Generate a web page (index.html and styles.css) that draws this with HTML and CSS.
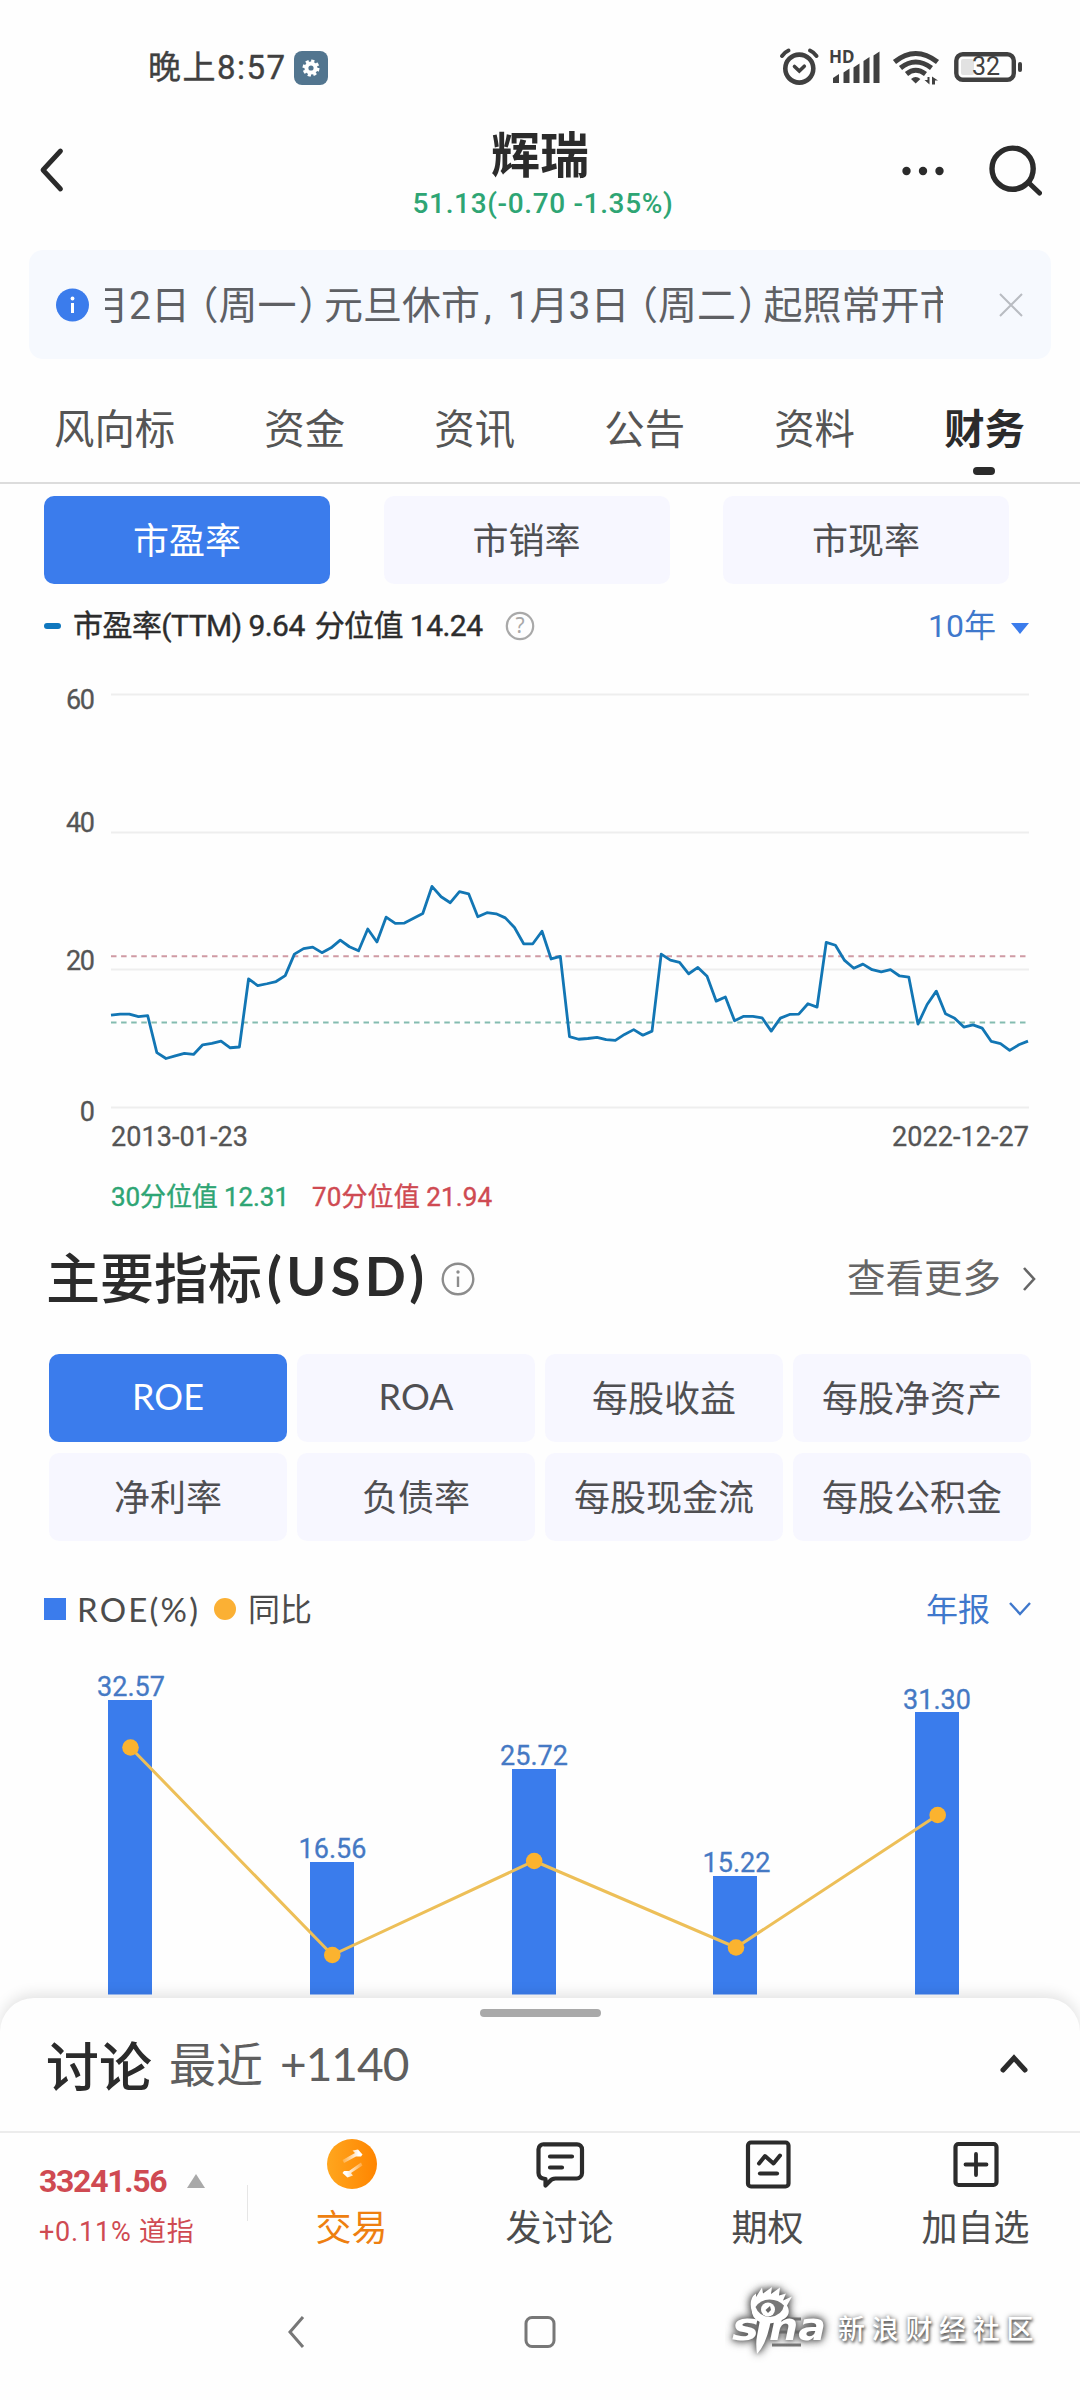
FILE: index.html
```html
<!DOCTYPE html>
<html lang="zh-CN">
<head>
<meta charset="utf-8">
<title>辉瑞 - 财务</title>
<link rel="stylesheet" href="styles.css">
</head>
<body>
<div class="status">
  <span class="clock">晚上8:57</span>
  <svg class="badge" width="34" height="34" viewBox="0 0 34 34"><rect width="34" height="34" rx="8" fill="#52758f"/><circle cx="17" cy="17" r="4.6" fill="none" stroke="#fff" stroke-width="4"/><circle cx="17" cy="17" r="7.2" fill="none" stroke="#fff" stroke-width="2.6" stroke-dasharray="3.2 2.45"/></svg>
  <svg class="status-icons" width="250" height="44" viewBox="776 46 250 44">
    <g fill="none" stroke="#404040" stroke-width="4.6" stroke-linecap="round">
      <circle cx="799.3" cy="68.6" r="14"/>
      <path d="M794.5 66.5l4.8 4.5 5-4.8" stroke-width="3.6"/>
      <path d="M782 56q2-3.500 6.500-5.500M816.500 56q-2-3.500-6.500-5.500" stroke-width="4"/>
    </g>
    <text x="829" y="63.300" class="hd">HD</text>
    <g fill="#404040">
      <path d="M833 83v-5l6-4v9zM843.500 83v-10.500l6-4V83zM853.500 83V67.500l6-4V83zM863.500 83V61l6-4v26zM873.500 83V55.500l6-4V83z"/>
      <path d="M915.700 83.500l-4.700-4.500q4.700-4 9.400 0z"/>
      <path d="M924.500 80h3v-3h2v7.500zM932 84.500v-8l6 4h-3v4z"/>
    </g>
    <g fill="none" stroke="#404040" stroke-width="5">
      <path d="M894.500 62q21-17 43 0M900.500 68q15-12 31 0M906.500 74q9-7.500 19 0"/>
    </g>
    <rect x="956.300" y="54.200" width="57.500" height="25.600" rx="6.500" fill="none" stroke="#404040" stroke-width="4.400"/>
    <rect x="961" y="59" width="13" height="16" rx="2" fill="#e2e2e2"/>
    <text x="986" y="75.300" class="battery">32</text>
    <rect x="1018" y="62" width="4" height="10" rx="2" fill="#404040"/>
  </svg>
</div>

<header class="header">
  <svg class="back" width="26" height="46" viewBox="0 0 26 46"><path d="M22.500 4L5 23l17.500 19" fill="none" stroke="#2b2b2b" stroke-width="4.800" stroke-linecap="round" stroke-linejoin="round"/></svg>
  <div class="stock">
    <h1>辉瑞</h1>
    <div class="quote">51.13(-0.70 -1.35%)</div>
  </div>
  <div class="actions">
    <svg width="42" height="10" viewBox="0 0 42 10" fill="#2b2b2b"><circle cx="4.500" cy="5" r="4.200"/><circle cx="21" cy="5" r="4.200"/><circle cx="37.500" cy="5" r="4.200"/></svg>
    <svg width="54" height="52" viewBox="0 0 54 52"><g fill="none" stroke="#2b2b2b"><circle cx="24.600" cy="23.700" r="20.600" stroke-width="5.400"/><path d="M41.500 38.500l10 9.500" stroke-width="5" stroke-linecap="round"/></g></svg>
  </div>
</header>

<div class="notice">
  <svg width="34" height="34" viewBox="0 0 34 34"><circle cx="16.500" cy="17" r="16.500" fill="#3b7cec"/><circle cx="16.500" cy="10.500" r="1.900" fill="#fff"/><path d="M16.500 15v10" stroke="#fff" stroke-width="3"/></svg>
  <div class="marquee"><p>月2日<i class="po">（</i>周一<i class="pc">）</i>元旦休市<i class="cm">,</i>1月3日<i class="po">（</i>周二<i class="pc">）</i>起照常开市</p></div>
  <svg width="24" height="24" viewBox="0 0 24 24"><path d="M1 1l22 22M23 1L1 23" stroke="#b9bcc2" stroke-width="2"/></svg>
</div>

<nav class="tabs">
  <span>风向标</span><span>资金</span><span>资讯</span><span>公告</span><span>资料</span><span class="active">财务</span>
</nav>

<div class="ratios">
  <button class="chip on">市盈率</button><button class="chip">市销率</button><button class="chip">市现率</button>
</div>

<div class="pe-legend">
  <span class="dash"></span>
  <span class="pe-text">市盈率(TTM) 9.64 <b>分位值 14.24</b></span>
  <svg width="30" height="30" viewBox="0 0 30 30"><circle cx="15" cy="15" r="13.200" fill="none" stroke="#a9a9a9" stroke-width="2.200"/><text x="15" y="22" class="q">?</text></svg>
  <span class="range">10年</span>
  <span class="tri"></span>
</div>

<svg class="pe-chart" width="1080" height="560" viewBox="0 660 1080 560">
  <path d="M111 694.500H1029M111 832.500H1029M111 969.500H1029M111 1107.500H1029" stroke="#eeeeee" stroke-width="2"/>
  <path d="M111 956.300H1029" stroke="#cf9aa4" stroke-width="2" stroke-dasharray="5.500 4.600"/>
  <path d="M111 1022.600H1029" stroke="#84bcb0" stroke-width="2" stroke-dasharray="5.500 4.600"/>
  <g class="axis">
    <text x="95" y="708.500" text-anchor="end" textLength="29">60</text>
    <text x="95" y="831.500" text-anchor="end" textLength="29">40</text>
    <text x="95" y="969.500" text-anchor="end" textLength="29">20</text>
    <text x="95" y="1120.500" text-anchor="end">0</text>
    <text x="111" y="1146" textLength="137">2013-01-23</text>
    <text x="1029" y="1146" text-anchor="end" textLength="137">2022-12-27</text>
  </g>
  <g transform="translate(111 660) scale(9.17 .37)">
    <polyline fill="none" stroke="#1276b4" stroke-width="2.800" stroke-linejoin="round" vector-effect="non-scaling-stroke" points="0,960 1,957 2,957 3,964 4,961 5,1061 6,1077 7,1070 8,1063 9,1066 10,1040 11,1036 12,1030 13,1048 14,1046 15,862 16,880 17,875 18,869 19,853 20,795 21,780 22,776 23,791 24,778 25,757 26,775 27,786 28,727 29,762 30,695 31,712 32,711 33,698 34,685 35,612 36,640 37,656 38,626 39,632 40,694 41,683 42,686 43,697 44,723 45,767 46,767 47,733 48,808 49,801 50,1018 51,1025 52,1023 53,1020 54,1026 55,1028 56,1012 57,999 58,1014 59,1003 60,795 61,811 62,817 63,848 64,831 65,855 66,922 67,911 68,975 69,963 70,963 71,967 72,1003 73,968 74,958 75,957 76,929 77,938 78,763 79,771 80,812 81,833 82,822 83,837 84,843 85,837 86,854 87,857 88,984 89,931 90,895 91,956 92,968 93,992 94,986 95,995 96,1031 97,1037 98,1055 99,1040 100,1030"/>
  </g>
  <text x="111" y="1205.500" class="p30" textLength="178">30分位值 12.31</text>
  <text x="312" y="1205.500" class="p70" textLength="180">70分位值 21.94</text>
</svg>

<div class="section-head">
  <h2>主要指标<span>(USD)</span></h2>
  <svg width="34" height="34" viewBox="0 0 34 34"><circle cx="17" cy="17" r="15.300" fill="none" stroke="#8c8c8c" stroke-width="2.400"/><circle cx="17" cy="10" r="1.700" fill="#8c8c8c"/><path d="M17 14.500v10.500" stroke="#8c8c8c" stroke-width="2.400"/></svg>
  <span class="more">查看更多</span>
  <svg class="more-arrow" width="14" height="26" viewBox="0 0 14 26"><path d="M2 2l10 11L2 24" fill="none" stroke="#666" stroke-width="2.600"/></svg>
</div>

<div class="metrics">
  <button class="chip on">ROE</button><button class="chip">ROA</button><button class="chip">每股收益</button><button class="chip">每股净资产</button>
  <button class="chip">净利率</button><button class="chip">负债率</button><button class="chip">每股现金流</button><button class="chip">每股公积金</button>
</div>

<div class="roe-legend">
  <span class="sq"></span><span class="t1">ROE(%)</span><span class="dot"></span><span class="t2">同比</span>
  <span class="period">年报</span>
  <svg width="24" height="16" viewBox="0 0 24 16"><path d="M2 2l10 11L22 2" fill="none" stroke="#3f78cc" stroke-width="2.400"/></svg>
</div>

<svg class="roe-chart" width="1080" height="350" viewBox="0 1648 1080 350">
  <g fill="#3a7cec">
    <rect x="108" y="1700" width="44" height="294.500"/>
    <rect x="310" y="1862" width="44" height="132.500"/>
    <rect x="512" y="1769" width="44" height="225.500"/>
    <rect x="713" y="1876" width="44" height="118.500"/>
    <rect x="915" y="1712" width="44" height="282.500"/>
  </g>
  <polyline points="130.500,1747.500 332.300,1955 534.200,1861 736,1947.500 937.700,1815" fill="none" stroke="#edbf58" stroke-width="3"/>
  <g fill="#fbb32f"><circle cx="130.500" cy="1747.500" r="8.300"/><circle cx="332.300" cy="1955" r="8.300"/><circle cx="534.200" cy="1861" r="8.300"/><circle cx="736" cy="1947.500" r="8.300"/><circle cx="937.700" cy="1815" r="8.300"/></g>
  <g class="val">
    <text x="131" y="1696">32.57</text><text x="332.500" y="1858">16.56</text><text x="534" y="1765">25.72</text><text x="736.500" y="1872">15.22</text><text x="937" y="1709">31.30</text>
  </g>
</svg>

<section class="sheet">
  <div class="handle"></div>
  <div class="discuss">
    <strong>讨论</strong><span>最近</span><em>+1140</em>
    <svg width="30" height="20" viewBox="0 0 30 20"><path d="M4 16L15 4l11 12" fill="none" stroke="#2b2b2b" stroke-width="5" stroke-linecap="round" stroke-linejoin="miter"/></svg>
  </div>
</section>

<footer class="toolbar">
  <div class="index">
    <div class="row"><b>33241.56</b><span class="up"></span></div>
    <div class="sub">+0.11% 道指</div>
  </div>
  <div class="vline"></div>
  <div class="item trade">
    <svg width="52" height="52" viewBox="0 0 52 52"><defs><linearGradient id="og" x1="0" x2="1"><stop offset="0" stop-color="#ffa61e"/><stop offset="1" stop-color="#ff8500"/></linearGradient><linearGradient id="wa" x1="0" x2="1"><stop offset="0" stop-color="#fff" stop-opacity=".2"/><stop offset=".8" stop-color="#fff"/></linearGradient><linearGradient id="wb" x1="1" x2="0"><stop offset="0" stop-color="#fff" stop-opacity=".2"/><stop offset=".8" stop-color="#fff"/></linearGradient></defs><circle cx="26" cy="26" r="25" fill="url(#og)"/><path d="M18 25L16.500 22 29 15l-2.500-2.500L32 11.500l4.500 5-1.500 2h-5z" fill="url(#wa)"/><path d="M35 24.500l1.500 3L25 35l2 2.500-5.500 2-5-4.500 1.500-2h5z" fill="url(#wb)"/></svg>
    <span>交易</span>
  </div>
  <div class="item">
    <svg width="52" height="52" viewBox="0 0 52 52" fill="none" stroke="#2b2b2b" stroke-width="4.200" stroke-linejoin="round" stroke-linecap="round"><path d="M10 6.300h33a5 5 0 0 1 5 5V35a5.500 5.500 0 0 1-5.500 5.500H21.500q-4 0-6.500 3.500l-3.500 3.500v-6.500q-7-.5-7-6V11.300a5 5 0 0 1 5.500-5z"/><path d="M16 18.500h22M16 29.500h12"/></svg>
    <span>发讨论</span>
  </div>
  <div class="item">
    <svg width="52" height="52" viewBox="0 0 52 52" fill="none" stroke="#2b2b2b" stroke-width="4.200" stroke-linejoin="round" stroke-linecap="round"><rect x="6" y="4.500" width="40.500" height="44" rx="3"/><path d="M17 25.500l6-7.500 8.500 7.500 6.500-8" stroke-width="4"/><path d="M18 35.500h17"/></svg>
    <span>期权</span>
  </div>
  <div class="item">
    <svg width="52" height="52" viewBox="0 0 52 52" fill="none" stroke="#2b2b2b" stroke-width="4.200" stroke-linejoin="round" stroke-linecap="round"><rect x="5.500" y="6" width="41" height="41" rx="3"/><path d="M26 16v21M15.500 26.500h21" stroke-width="3.800"/></svg>
    <span>加自选</span>
  </div>
</footer>

<div class="sysnav">
  <svg width="18" height="34" viewBox="0 0 18 34"><path d="M16 2L3 17l13 15" fill="none" stroke="#777" stroke-width="3"/></svg>
  <svg width="32" height="34" viewBox="0 0 32 34"><rect x="2" y="2.500" width="28" height="29" rx="6" fill="none" stroke="#777" stroke-width="3"/></svg>
  <svg width="30" height="34" viewBox="0 0 30 34"><path d="M0 4h29M0 17h29M0 30h29" stroke="#777" stroke-width="3"/></svg>
</div>

<div class="watermark">
  <svg width="110" height="84" viewBox="725 2280 110 84">
    <g class="logo">
      <text x="732" y="2340" class="sina" textLength="27" lengthAdjust="spacingAndGlyphs">s</text>
      <path d="M760 2320h11l-1.500 7q-4 18-12.500 27-1.500-11 0-18z" fill="#fff"/>
      <text x="769" y="2340" class="sina" textLength="57" lengthAdjust="spacingAndGlyphs">na</text>
      <path d="M752 2312q-4-13 4-18.500l0 3.500 6-9.500 1 6 9-6.500-1 7 9-6.500-1 8 7-2-3 7 9-4-5 9q5 9-4 14-8 4.500-18 4-11-2-13-10.500z" fill="#fff"/>
      <path d="M755.500 2307q5-7.500 14-7.500t14.500 6q-2 10-14 11.500-11-.5-14.500-10z" fill="#777"/>
      <circle cx="768" cy="2309.500" r="7" fill="#fff"/><path d="M765.500 2310l4.500-4 1 4-3 3z" fill="#666"/>
    </g>
  </svg>
  <span>新浪财经社区</span>
</div>
</body>
</html>
```
FILE: styles.css
```css
* { box-sizing: border-box; margin: 0; padding: 0; }
html, body { width: 1080px; height: 2400px; overflow: hidden; }
body {
  position: relative;
  display: flex;
  flex-direction: column;
  background: #fefefe;
  color: #4c4c4c;
  font-family: Roboto, "Noto Sans CJK SC", sans-serif;
}
svg { display: block; flex: none; }
button { border: 0; font: inherit; color: inherit; }

.status { height: 100px; flex: none; display: flex; align-items: center; padding: 36px 54px 0 148px; color: #404040; }
.clock { font-size: 33px; line-height: 40px; width: 146px; white-space: nowrap; letter-spacing: 1.5px; -webkit-text-stroke: .4px #404040; }
.status-icons { margin-left: auto; }
.hd { font: 700 17px "Noto Sans", sans-serif; fill: #404040; }
.battery { font: 400 25px Roboto, sans-serif; fill: #404040; text-anchor: middle; }

.header { height: 150px; flex: none; display: grid; grid-template-columns: 1fr auto 1fr; padding: 0 38px; align-items: start; }
.back { margin-top: 47px; }
.stock { padding-top: 29px; text-align: center; }
.stock h1 { font-size: 49px; line-height: 56px; font-weight: 700; color: #2b2b2b; }
.quote { font-size: 28px; line-height: 38px; margin: 0 -3px 0 3px; font-weight: 500; color: #2ea574; white-space: nowrap; letter-spacing: .65px; }
.actions { display: flex; justify-content: flex-end; align-items: center; gap: 44px; margin-top: 45px; }

.notice { height: 109px; flex: none; margin: 0 29px; padding: 0 28px 0 27px; display: flex; align-items: center; border-radius: 14px; background: #f6f9fe; }
.marquee { width: 838px; margin: 0 auto 0 15px; overflow: hidden; }
.marquee p { margin: -2px 0 0 -15px; font-size: 39px; line-height: 56px; white-space: nowrap; color: #5e6064; }
.marquee i { font-style: normal; }
.po, .pc { font-family: "Noto Sans CJK SC", sans-serif; font-feature-settings: "halt"; }
.po { padding-left: 9px; }
.pc { padding: 0 6px 0 2px; }
.cm { padding: 0 16px 0 4px; }

.tabs { height: 125px; flex: none; display: flex; justify-content: space-between; padding: 51px 55px 0 54px; border-bottom: 2px solid #dcdcdc; font-size: 40.4px; line-height: 42px; color: #555; }
.tabs .active { position: relative; font-weight: 700; color: #2b2b2b; }
.tabs .active::after { content: ""; position: absolute; left: 50%; top: 57px; width: 22px; height: 8px; margin-left: -12px; border-radius: 4px; background: #2b2b2b; }

.chip { display: flex; align-items: center; justify-content: center; height: 88px; padding-bottom: 4px; border-radius: 10px; background: #f7f7ff; color: #4f4f52; font-family: Lato, "Noto Sans CJK SC", sans-serif; font-size: 36px; }
.chip.on { background: #3b7cec; color: #fff; }
.ratios { flex: none; display: grid; grid-template-columns: repeat(3, 286px); gap: 53.5px; padding: 12px 0 0 44px; }

.pe-legend { height: 76px; flex: none; display: flex; align-items: center; padding: 8px 51px 0 44px; }
.dash { width: 17px; height: 6px; border-radius: 3px; background: #0f77be; margin-right: 12px; }
.pe-text { width: 412px; font-size: 30px; line-height: 36px; color: #2d2d2d; letter-spacing: -.55px; margin-right: 20px; white-space: nowrap; -webkit-text-stroke: .4px #2d2d2d; }
.pe-text b { font-weight: 400; margin-left: 3px; }
.q { font: 21px "Noto Sans", sans-serif; fill: #a9a9a9; text-anchor: middle; }
.range { margin-left: auto; font-size: 32px; line-height: 36px; color: #3f78cc; }
.tri { margin: 4px 0 0 15px; border: solid transparent; border-width: 11px 9px 0; border-top-color: #3b7cec; }

.axis { font-size: 27px; fill: #555; stroke: #555; stroke-width: .3px; }
.p30, .p70 { font-size: 26px; }
.p30 { fill: #2ea574; stroke: #2ea574; stroke-width: .4px; }
.p70 { fill: #cf4a52; stroke: #cf4a52; stroke-width: .4px; }

.section-head { height: 134px; flex: none; display: flex; align-items: center; padding: 0 44px 16px 46px; }
.section-head h2 { display: flex; font: 500 54px/60px "Noto Sans CJK SC", sans-serif; color: #2b2b2b; white-space: nowrap; width: 395px; margin-top: -6px; }
.section-head h2 span { font-family: Lato, sans-serif; font-weight: 700; letter-spacing: 4.4px; margin-left: 5px; }
.more { margin-left: auto; font-size: 38.5px; line-height: 44px; color: #666; }
.more-arrow { margin-left: 21px; }

.metrics { flex: none; display: grid; grid-template-columns: repeat(4, 237px); gap: 11px; padding: 0 0 0 49px; }
.metrics .chip { width: 238px; }

.roe-legend { height: 107px; flex: none; display: flex; align-items: center; padding: 29px 48px 0 44px; font-family: Lato, "Noto Sans CJK SC", sans-serif; font-size: 32px; line-height: 36px; color: #4c4c4c; }
.sq { width: 22px; height: 22px; background: #3b7cec; margin-right: 11px; }
.t1 { width: 137px; white-space: nowrap; font-size: 33px; letter-spacing: 2.2px; }
.dot { width: 22px; height: 22px; border-radius: 50%; background: #fbb034; margin-right: 12px; }
.period { margin-left: auto; margin-right: 18px; color: #3f78cc; }
.val { font-size: 27px; fill: #4579c4; stroke: #4579c4; stroke-width: .3px; text-anchor: middle; }

.sheet { height: 135px; flex: none; position: relative; border-radius: 34px 34px 0 0; background: #fefefe; box-shadow: 0 -4px 14px rgba(0, 0, 0, .11); border-bottom: 2px solid #ececec; clip-path: inset(-20px 0 0 0); padding-top: 11px; }
.handle { width: 121px; height: 8px; border-radius: 4px; background: #a9a9a9; margin: 0 auto; }
.discuss { display: flex; align-items: center; height: 94px; padding: 0 51px 0 46px; font-family: Lato, "Noto Sans CJK SC", sans-serif; }
.discuss strong { font-size: 53px; font-weight: 500; color: #2b2b2b; font-family: "Noto Sans CJK SC", sans-serif; line-height: 60px; }
.discuss span { margin-left: 17px; font-size: 47px; line-height: 60px; color: #5f5f5f; }
.discuss em { margin-left: 17px; font-style: normal; font-size: 46px; line-height: 60px; letter-spacing: -1px; color: #5f5f5f; }
.discuss svg { margin-left: auto; }

.toolbar { height: 129px; flex: none; display: flex; }
.index { width: 247px; padding: 30px 0 0 39px; color: #cf4a52; white-space: nowrap; }
.row { display: flex; align-items: center; line-height: 36px; }
.row b { width: 127px; font-size: 32px; font-weight: 700; letter-spacing: -1.3px; }
.up { margin-left: 21px; border: solid transparent; border-width: 0 9px 14px; border-bottom-color: #a9a9a9; }
.sub { font-size: 27px; line-height: 36px; margin-top: 15px; letter-spacing: .8px; }
.vline { width: 1px; height: 36px; margin-top: 52px; background: #e6e6e6; }
.item { width: 208px; padding-top: 5px; display: flex; flex-direction: column; align-items: center; font-size: 36px; line-height: 44px; color: #4c4c4c; }
.item svg, .item span { margin-left: -1px; }
.item span { margin-top: 17px; }
.trade span { color: #ee7f10; }

.sysnav { flex: 1; display: flex; align-items: flex-start; padding: 53px 0 0 287px; }
.sysnav svg + svg { margin-left: 219px; }
.sysnav svg:last-child { margin-left: 216px; }

.watermark { position: absolute; left: 725px; top: 2280px; display: flex; align-items: center; }
.logo { filter: drop-shadow(0 0 4px #555) drop-shadow(0 0 2px #777); }
.sina { font: italic 700 37px "DejaVu Sans", sans-serif; fill: #fff; }
.watermark span { margin: 16px 0 0 3px; font-size: 27px; line-height: 36px; letter-spacing: 6.700px; color: #fff; font-weight: 500; text-shadow: 1px 2px 3px #555, 0 0 5px #777; white-space: nowrap; }
```
